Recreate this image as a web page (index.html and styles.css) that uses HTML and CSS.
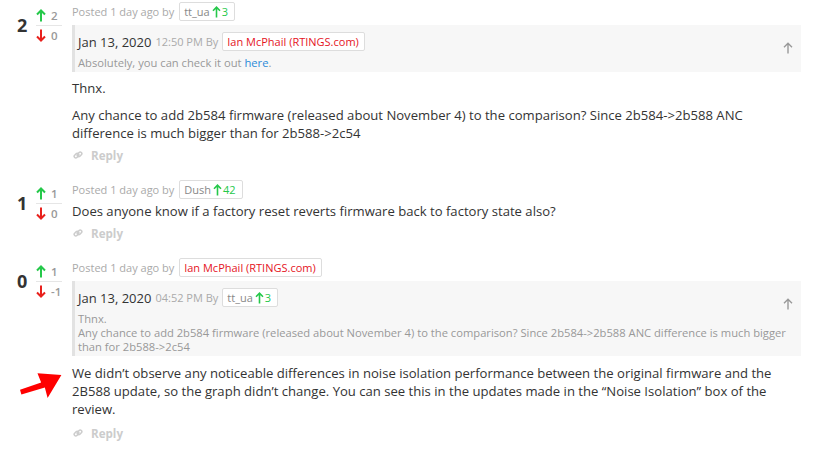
FILE: index.html
```html
<!DOCTYPE html>
<html>
<head>
<meta charset="utf-8">
<link rel="stylesheet" href="styles.css">
</head>
<body>
<div class="comments">

  <div class="comment">
    <div class="vote">
      <div class="score">2</div>
      <div class="arrows">
        <div class="arow up-row"><svg class="varrow" viewBox="0 0 10 13"><path d="M5 12.5V1.5M1 5.5L5 1.5L9 5.5" fill="none" stroke="#25c84a" stroke-width="2"/></svg><span>2</span></div>
        <div class="arow"><svg class="varrow" viewBox="0 0 10 13"><path d="M5 0.5V11.5M1 7.5L5 11.5L9 7.5" fill="none" stroke="#e8201c" stroke-width="2"/></svg><span>0</span></div>
      </div>
    </div>
    <div class="body">
      <div class="meta">Posted 1 day ago by <span class="badge">tt_ua<svg class="barrow" viewBox="0 0 9 12"><path d="M4.5 11.5V1.2M1 4.7L4.5 1.2L8 4.7" fill="none" stroke="#25c84a" stroke-width="1.6"/></svg><span class="g">3</span></span></div>
      <div class="quote">
        <div class="qhead"><span class="qdate">Jan 13, 2020</span><span class="qtime">12:50 PM By</span><span class="badge red">Ian McPhail (RTINGS.com)</span></div>
        <div class="qtext">Absolutely, you can check it out <a href="#">here</a>.</div>
        <svg class="qarrow" viewBox="0 0 10 12"><path d="M5 11.5V1.2M1 5.2L5 1.2L9 5.2" fill="none" stroke="#999" stroke-width="1.4"/></svg>
      </div>
      <p class="text after-quote">Thnx.</p>
      <p class="text second">Any chance to add 2b584 firmware (released about November 4) to the comparison? Since 2b584-&gt;2b588 ANC difference is much bigger than for 2b588-&gt;2c54</p>
      <div class="reply"><svg class="link" viewBox="0 0 10 10"><g fill="none" stroke="#ccc" stroke-width="1.5"><rect x="0.9" y="4" width="5.2" height="3.2" rx="1.6" transform="rotate(-45 3.5 5.6)"/><rect x="3.9" y="2.8" width="5.2" height="3.2" rx="1.6" transform="rotate(-45 6.5 4.4)"/></g></svg>Reply</div>
    </div>
  </div>

  <div class="comment">
    <div class="vote">
      <div class="score">1</div>
      <div class="arrows">
        <div class="arow up-row"><svg class="varrow" viewBox="0 0 10 13"><path d="M5 12.5V1.5M1 5.5L5 1.5L9 5.5" fill="none" stroke="#25c84a" stroke-width="2"/></svg><span>1</span></div>
        <div class="arow"><svg class="varrow" viewBox="0 0 10 13"><path d="M5 0.5V11.5M1 7.5L5 11.5L9 7.5" fill="none" stroke="#e8201c" stroke-width="2"/></svg><span>0</span></div>
      </div>
    </div>
    <div class="body">
      <div class="meta">Posted 1 day ago by <span class="badge">Dush<svg class="barrow" viewBox="0 0 9 12"><path d="M4.5 11.5V1.2M1 4.7L4.5 1.2L8 4.7" fill="none" stroke="#25c84a" stroke-width="1.6"/></svg><span class="g">42</span></span></div>
      <p class="text after-meta">Does anyone know if a factory reset reverts firmware back to factory state also?</p>
      <div class="reply"><svg class="link" viewBox="0 0 10 10"><g fill="none" stroke="#ccc" stroke-width="1.5"><rect x="0.9" y="4" width="5.2" height="3.2" rx="1.6" transform="rotate(-45 3.5 5.6)"/><rect x="3.9" y="2.8" width="5.2" height="3.2" rx="1.6" transform="rotate(-45 6.5 4.4)"/></g></svg>Reply</div>
    </div>
  </div>

  <div class="comment last">
    <div class="vote">
      <div class="score">0</div>
      <div class="arrows">
        <div class="arow up-row"><svg class="varrow" viewBox="0 0 10 13"><path d="M5 12.5V1.5M1 5.5L5 1.5L9 5.5" fill="none" stroke="#25c84a" stroke-width="2"/></svg><span>1</span></div>
        <div class="arow"><svg class="varrow" viewBox="0 0 10 13"><path d="M5 0.5V11.5M1 7.5L5 11.5L9 7.5" fill="none" stroke="#e8201c" stroke-width="2"/></svg><span>-1</span></div>
      </div>
    </div>
    <div class="body">
      <div class="meta">Posted 1 day ago by <span class="badge red">Ian McPhail (RTINGS.com)</span></div>
      <div class="quote">
        <div class="qhead"><span class="qdate">Jan 13, 2020</span><span class="qtime">04:52 PM By</span><span class="badge">tt_ua<svg class="barrow" viewBox="0 0 9 12"><path d="M4.5 11.5V1.2M1 4.7L4.5 1.2L8 4.7" fill="none" stroke="#25c84a" stroke-width="1.6"/></svg><span class="g">3</span></span></div>
        <div class="qtext">Thnx.<br>Any chance to add 2b584 firmware (released about November 4) to the comparison? Since 2b584-&gt;2b588 ANC difference is much bigger than for 2b588-&gt;2c54</div>
        <svg class="qarrow" viewBox="0 0 10 12"><path d="M5 11.5V1.2M1 5.2L5 1.2L9 5.2" fill="none" stroke="#999" stroke-width="1.4"/></svg>
      </div>
      <p class="text after-quote long">We didn’t observe any noticeable differences in noise isolation performance between the original firmware and the 2B588 update, so the graph didn’t change. You can see this in the updates made in the “Noise Isolation” box of the review.</p>
      <div class="reply spaced"><svg class="link" viewBox="0 0 10 10"><g fill="none" stroke="#ccc" stroke-width="1.5"><rect x="0.9" y="4" width="5.2" height="3.2" rx="1.6" transform="rotate(-45 3.5 5.6)"/><rect x="3.9" y="2.8" width="5.2" height="3.2" rx="1.6" transform="rotate(-45 6.5 4.4)"/></g></svg>Reply</div>
    </div>
    <svg class="pointer" viewBox="0 0 50 32"><polygon points="0,18 1.5,23 27,15.5 30,27 45,2 19,0 23,10" fill="#f00"/></svg>
  </div>

</div>
</body>
</html>
```

FILE: styles.css
```css
body {
  margin: 0;
  background: #fff;
  font-family: "Open Sans", "DejaVu Sans", sans-serif;
  color: #333;
}

.comments {
  padding-top: 2px;
}

.comment {
  display: flex;
  position: relative;
}

.comment + .comment {
  margin-top: 16px;
}

.vote {
  width: 72px;
  flex: none;
  box-sizing: border-box;
  padding: 3px 0 0 17px;
  display: flex;
  align-items: center;
  align-self: flex-start;
  gap: 9px;
}

.score {
  width: 10px;
  font-size: 18px;
  font-weight: 700;
  color: #333;
  line-height: 20px;
}

.arrows {
  width: 26px;
}

.arow {
  height: 19px;
  display: flex;
  align-items: center;
  gap: 5px;
  font-size: 11.5px;
  font-weight: 600;
  color: #999;
}

.up-row {
  height: 20px;
  border-bottom: 1px solid #e6e6e6;
}

.varrow {
  width: 10px;
  height: 13px;
  flex: none;
}

.body {
  width: 729px;
  flex: none;
}

.meta {
  height: 19px;
  display: flex;
  align-items: center;
  font-size: 11px;
  color: #aaa;
  white-space: pre;
}

.badge {
  display: inline-flex;
  align-items: center;
  height: 19px;
  box-sizing: border-box;
  border: 1px solid #ddd;
  border-radius: 2px;
  background: #fff;
  padding: 0 6px 0 4px;
  margin-left: 2px;
  font-size: 11px;
  color: #888;
  white-space: nowrap;
}

.badge.red {
  color: #e5141e;
  padding: 0 5px 0 4px;
}

.barrow {
  width: 9px;
  height: 12px;
  margin: 0 1px 0 2px;
}

.g {
  color: #25c84a;
}

.quote {
  position: relative;
  margin-top: 4px;
  background: #f7f7f7;
  border-left: 3px solid #e2e2e2;
  padding: 7px 10px 2px 3px;
}

.qhead {
  display: flex;
  align-items: center;
  height: 19px;
}

.qdate {
  font-size: 13px;
  color: #333;
}

.qtime {
  font-size: 11px;
  color: #aaa;
  margin: 0 2px 0 4px;
}

.qhead .badge {
  margin-left: 2px;
}

.qtext {
  margin-top: 5px;
  font-size: 11.2px;
  line-height: 14px;
  color: #999;
}

.qtext a {
  color: #2a8ad8;
  text-decoration: none;
}

.qarrow {
  position: absolute;
  right: 8px;
  top: 17px;
  width: 10px;
  height: 12px;
}

.text {
  margin: 0;
  font-size: 13.1px;
  line-height: 18px;
  color: #333;
}

.after-quote {
  margin-top: 7px;
}

.long {
  margin-top: 8px;
}

.second {
  margin-top: 9px;
}

.after-meta {
  margin-top: 3px;
}

.reply {
  margin-top: 4px;
  height: 18px;
  display: flex;
  align-items: center;
  gap: 8px;
  font-size: 11.6px;
  font-weight: 700;
  color: #ccc;
}

.reply.spaced {
  margin-top: 6px;
}

.link {
  width: 10px;
  height: 10px;
  margin-left: 1px;
}

.pointer {
  position: absolute;
  left: 20px;
  top: 115px;
  width: 46px;
  height: 30px;
}
```
